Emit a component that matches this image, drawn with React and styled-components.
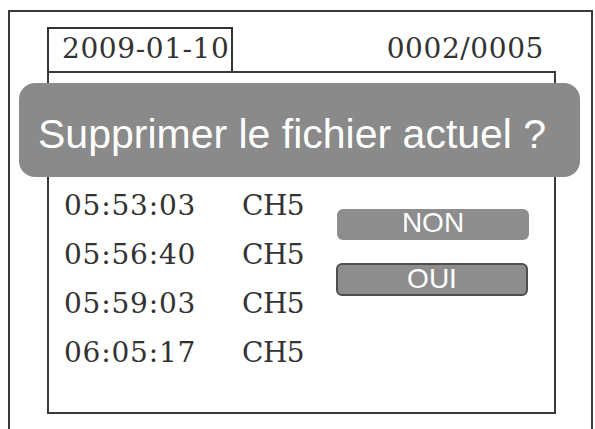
import React from 'react'
import styled, { createGlobalStyle } from 'styled-components'

const Global = createGlobalStyle`
  html, body {
    margin: 0;
    padding: 0;
    background: #ffffff;
  }
`

const Screen = styled.div`
  position: relative;
  width: 595px;
  height: 429px;
  overflow: hidden;
  background: #ffffff;
`

const Frame = styled.div`
  box-sizing: border-box;
  margin: 10px 0 0 8px;
  width: 585px;
  height: 440px;
  border: solid 2px #3a3a3a;
  border-bottom: none;
  padding: 15px 0 0 37px;
`

const Header = styled.div`
  display: flex;
  justify-content: space-between;
  width: 509px;
`

const DateBox = styled.div`
  box-sizing: border-box;
  width: 186px;
  height: 44px;
  border: solid 2px #333333;
  border-bottom: none;
  padding-left: 13px;
`

const SerifText = styled.span`
  font-family: "DejaVu Serif", "Liberation Serif", serif;
  font-size: 28px;
  line-height: 40px;
  letter-spacing: 0.6px;
  color: #333333;
`

const Counter = styled(SerifText)`
  padding: 2px 12px 0 0;
`

const Panel = styled.div`
  box-sizing: border-box;
  width: 509px;
  height: 343px;
  border: solid 2px #3a3a3a;
  display: flex;
`

const List = styled.div`
  display: grid;
  grid-template-columns: 178px 95px;
  grid-auto-rows: 49px;
  align-content: start;
  padding: 108px 0 0 15px;
`

const Cell = styled(SerifText)`
  line-height: 49px;
  letter-spacing: ${({ tight }) => (tight ? '-0.5px' : '0.8px')};
`

const Buttons = styled.div`
  display: flex;
  flex-direction: column;
  gap: 23px;
  padding-top: 136px;
`

const Button = styled.div`
  box-sizing: border-box;
  width: 192px;
  height: ${({ selected }) => (selected ? '33px' : '31px')};
  margin-left: ${({ selected }) => (selected ? '-1px' : '0')};
  border-radius: 6px;
  background: #8d8d8d;
  border: ${({ selected }) => (selected ? 'solid 2px #4e4e4e' : 'none')};
  color: #ffffff;
  text-align: center;
  font-family: "Liberation Sans", Arial, sans-serif;
  font-size: 28px;
  line-height: 28px;
`

const Dialog = styled.div`
  position: absolute;
  left: 19px;
  top: 83px;
  box-sizing: border-box;
  width: 561px;
  height: 94px;
  border-radius: 16px;
  background: #8a8a8a;
  padding: 27px 0 0 19px;
  color: #ffffff;
  font-family: "Liberation Sans", Arial, sans-serif;
  font-size: 41px;
  line-height: 48px;
  white-space: nowrap;
`

const records = [
  { time: '05:53:03', ch: 'CH5' },
  { time: '05:56:40', ch: 'CH5' },
  { time: '05:59:03', ch: 'CH5' },
  { time: '06:05:17', ch: 'CH5' },
]

export default function App() {
  return (
    <Screen>
      <Global />
      <Frame>
        <Header>
          <DateBox>
            <SerifText>2009-01-10</SerifText>
          </DateBox>
          <Counter>0002/0005</Counter>
        </Header>
        <Panel>
          <List>
            {records.map((r) => (
              <React.Fragment key={r.time}>
                <Cell>{r.time}</Cell>
                <Cell tight>{r.ch}</Cell>
              </React.Fragment>
            ))}
          </List>
          <Buttons>
            <Button>NON</Button>
            <Button selected>OUI</Button>
          </Buttons>
        </Panel>
      </Frame>
      <Dialog>Supprimer le fichier actuel ?</Dialog>
    </Screen>
  )
}
